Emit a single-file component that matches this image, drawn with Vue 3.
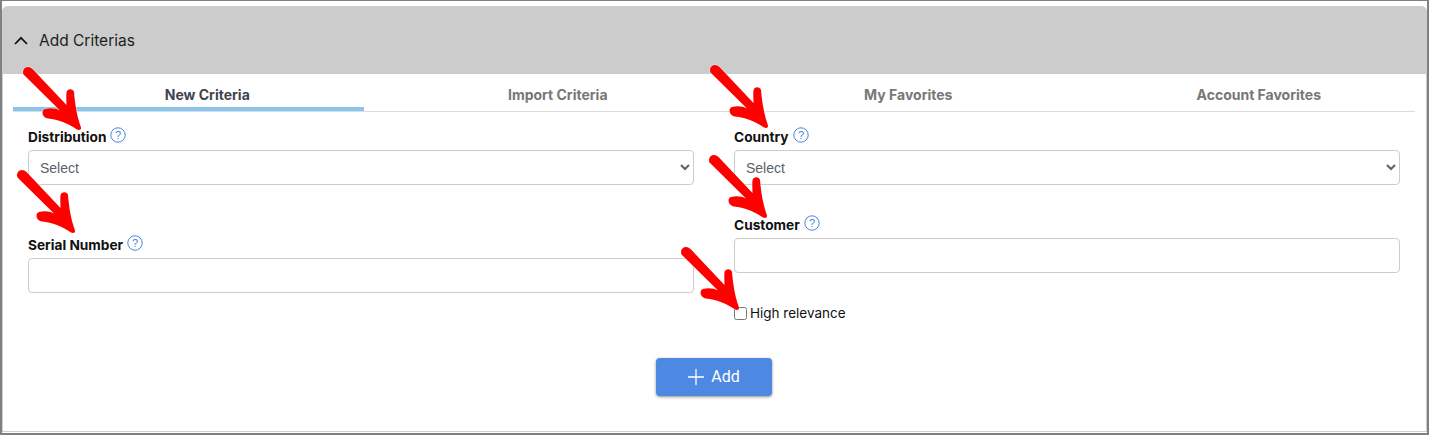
<script setup>
const tabs = [
  { label: 'New Criteria', active: true },
  { label: 'Import Criteria' },
  { label: 'My Favorites' },
  { label: 'Account Favorites' }
]
const arrows = [
  { x: 20, y: 64 },
  { x: 14, y: 167 },
  { x: 707, y: 62 },
  { x: 706, y: 152 },
  { x: 678, y: 244 }
]
</script>

<template>
  <div class="frame">
    <section class="panel">
      <header class="panel-head">
        <svg class="chev" width="14" height="9" viewBox="0 0 14 9"><path d="M1 8l6-6.2L13 8" fill="none" stroke="#111" stroke-width="1.7" /></svg>
        <span>Add Criterias</span>
      </header>

      <nav class="tabs">
        <div v-for="t in tabs" :key="t.label" class="tab" :class="{ active: t.active }">{{ t.label }}</div>
      </nav>

      <div class="form">
        <div class="col col-left">
          <div class="field">
            <label class="lbl">Distribution
              <svg class="help" width="16" height="16" viewBox="0 0 16 16"><circle cx="8" cy="8" r="7.2" fill="none" stroke="#4a86e0" stroke-width="1" /><text x="8" y="11.6" text-anchor="middle" class="q">?</text></svg>
            </label>
            <select class="ctl"><option>Select</option></select>
          </div>
          <div class="field">
            <label class="lbl">Serial Number
              <svg class="help" width="16" height="16" viewBox="0 0 16 16"><circle cx="8" cy="8" r="7.2" fill="none" stroke="#4a86e0" stroke-width="1" /><text x="8" y="11.6" text-anchor="middle" class="q">?</text></svg>
            </label>
            <input class="ctl" type="text" />
          </div>
        </div>

        <div class="col col-right">
          <div class="field">
            <label class="lbl">Country
              <svg class="help" width="16" height="16" viewBox="0 0 16 16"><circle cx="8" cy="8" r="7.2" fill="none" stroke="#4a86e0" stroke-width="1" /><text x="8" y="11.6" text-anchor="middle" class="q">?</text></svg>
            </label>
            <select class="ctl"><option>Select</option></select>
          </div>
          <div class="field">
            <label class="lbl">Customer
              <svg class="help" width="16" height="16" viewBox="0 0 16 16"><circle cx="8" cy="8" r="7.2" fill="none" stroke="#4a86e0" stroke-width="1" /><text x="8" y="11.6" text-anchor="middle" class="q">?</text></svg>
            </label>
            <input class="ctl" type="text" />
          </div>
          <label class="check"><input type="checkbox" /><span>High relevance</span></label>
        </div>
      </div>

      <div class="actions">
        <button class="add" type="button">
          <svg width="18" height="18" viewBox="0 0 18 18"><path d="M9 1v16M1 9h16" stroke="#fff" stroke-width="1.3" fill="none" /></svg>
          <span class="add-text">Add</span>
        </button>
      </div>
    </section>

    <svg
      v-for="(a, i) in arrows"
      :key="i"
      class="arrow"
      :style="{ left: a.x + 'px', top: a.y + 'px' }"
      width="70"
      height="70"
      viewBox="0 0 70 70"
    >
      <path
        d="M1.5 9.5C0 5.5 2.5 2 6 2C8 2 9.5 3 11 4.5L44.5 40C44.5 35 44 31 44.5 27.5C45 23.5 51 23 52 27C53 38 54.5 50 59 62.5C59.5 65 57 65.5 55 64.5C46 58 36 54.5 26 53.5C20.5 53 18.5 45.5 23 44C29 42.5 34 43.5 38 45.5Z"
        fill="#fe0000"
        stroke="#fff"
        stroke-opacity="0.7"
        stroke-width="1"
        paint-order="stroke"
      />
    </svg>
  </div>
</template>

<style scoped>
.frame {
  position: relative;
  box-sizing: border-box;
  width: 1429px;
  height: 435px;
  padding: 5px 0 0;
  border: 2px solid #808080;
  border-top-width: 1px;
  background: #fff;
  overflow: hidden;
  font-family: Inter, "Liberation Sans", sans-serif;
}
.panel {
  box-sizing: border-box;
  height: 426px;
  border: 1px solid #cfcfcf;
  border-top: 0;
  border-radius: 6px 6px 0 0;
  background: #fff;
}
.panel-head {
  display: flex;
  align-items: center;
  gap: 11px;
  height: 68px;
  padding-left: 12px;
  margin: 0 -1px;
  background: #cccccc;
  border-radius: 6px 6px 0 0;
  font-size: 15.5px;
  color: #1d1d1d;
}
.chev { flex: none; }
.tabs {
  display: grid;
  grid-template-columns: repeat(4, 1fr);
  height: 38px;
  margin: 0 11px 0 10px;
  border-bottom: 1px solid #dcdcdc;
  box-sizing: border-box;
}
.tab {
  display: flex;
  align-items: center;
  justify-content: center;
  height: 37px;
  padding: 3px 0 0 38px;
  box-sizing: border-box;
  font-size: 14px;
  font-weight: 700;
  color: #777;
}
.tab.active {
  padding-top: 7px;
  color: #3f4450;
  border-bottom: 4px solid #89c4ee;
}
.form {
  display: grid;
  grid-template-columns: 666px 666px;
  column-gap: 40px;
  padding: 16px 25px 0;
}
.col { display: flex; flex-direction: column; }
.col-left { gap: 51px; }
.col-right .field + .field { margin-top: 31px; }
.field { display: flex; flex-direction: column; }
.lbl {
  display: flex;
  align-items: center;
  gap: 4px;
  box-sizing: border-box;
  height: 22px;
  padding-bottom: 4px;
  font-size: 13.7px;
  font-weight: 700;
  color: #111;
}
.help { margin-top: -5px; flex: none; }
.q { font: 11px "Liberation Sans", sans-serif; fill: #4a86e0; }
.ctl {
  box-sizing: border-box;
  width: 100%;
  height: 35px;
  padding: 0 7px;
  border: 1px solid #cdcdcd;
  border-radius: 4px;
  background: #fff;
  font: 14px "Liberation Sans", sans-serif;
  color: #5a626a;
  outline: none;
}
.check {
  display: flex;
  align-items: center;
  gap: 3px;
  height: 20px;
  margin-top: 30px;
  font-size: 13.5px;
  color: #111;
}
.check input {
  width: 13px;
  height: 13px;
  margin: 0;
}
.actions {
  display: flex;
  justify-content: center;
  margin-top: 35px;
  margin-right: 2px;
}
.add {
  display: flex;
  align-items: center;
  justify-content: center;
  gap: 6px;
  width: 116px;
  height: 38px;
  padding: 0;
  border: 0;
  border-radius: 4px;
  background: #4d88e3;
  box-shadow: 0 1px 3px rgba(0, 0, 0, 0.45);
  color: #fff;
  font: 16px Roboto, "Liberation Sans", sans-serif;
}
.add-text { padding-bottom: 2px; }
.arrow {
  position: absolute;
  pointer-events: none;
}
</style>
